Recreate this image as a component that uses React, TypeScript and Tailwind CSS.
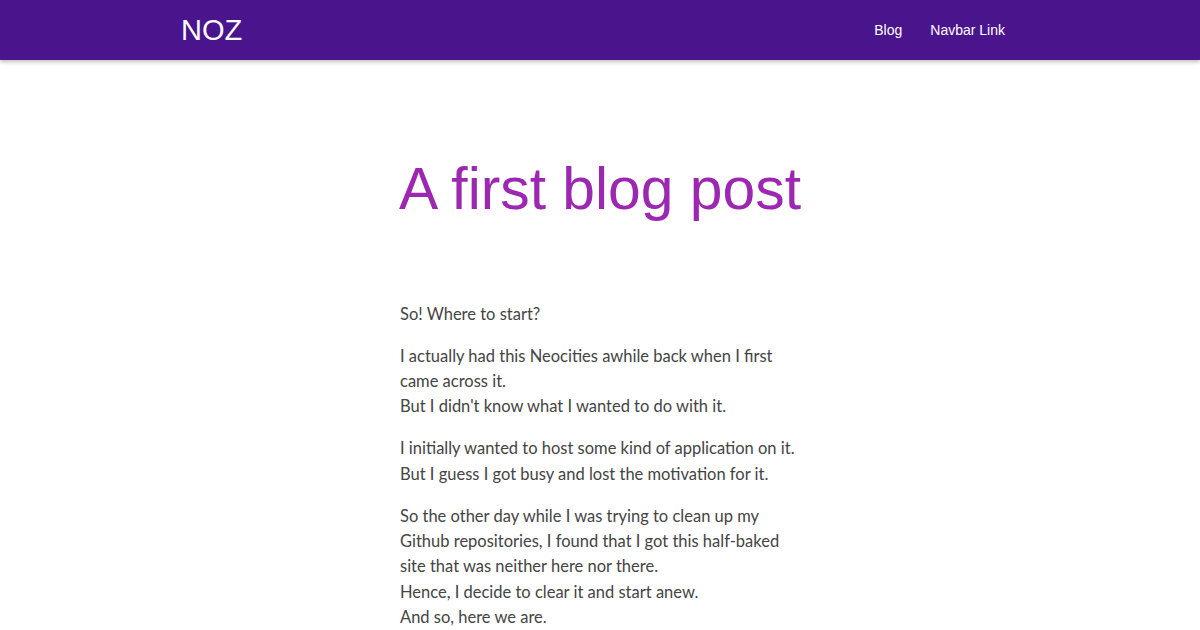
import React from "react";

export default function App() {
  const paragraphs = [
    ["So! Where to start?"],
    [
      "I actually had this Neocities awhile back when I first came across it.",
      "But I didn't know what I wanted to do with it.",
    ],
    [
      "I initially wanted to host some kind of application on it.",
      "But I guess I got busy and lost the motivation for it.",
    ],
    [
      "So the other day while I was trying to clean up my Github repositories, I found that I got this half-baked site that was neither here nor there.",
      "Hence, I decide to clear it and start anew.",
      "And so, here we are.",
    ],
  ];

  return (
    <div className="min-h-screen bg-white">
      <nav className="h-[60px] bg-[#4a148c] shadow-[0_2px_4px_rgba(0,0,0,0.25)] relative z-10">
        <div className="mx-auto w-[840px] h-full flex items-center justify-between">
          <a className="text-white text-[29px] font-['Liberation_Sans',Arial,sans-serif] leading-none pl-[1px]">NOZ</a>
          <ul className="flex h-full items-center font-['Liberation_Sans',Arial,sans-serif] text-[14px] text-white">
            <li className="px-[15px] pl-[17px] pr-[13px]">Blog</li>
            <li className="px-[15px]">Navbar Link</li>
          </ul>
        </div>
      </nav>

      <main className="mx-auto w-[840px]">
        <h1 className="text-center text-[#9c27b0] text-[58.8px] leading-[1.1] pt-[97px] font-['Liberation_Sans',Arial,sans-serif]">
          A first blog post
        </h1>
        <article className="mx-auto w-[400px] pt-[80px] font-['Lato','Open_Sans',sans-serif] text-[16.5px] leading-[25.2px] text-[#444444] flex flex-col gap-[17px]">
          {paragraphs.map((p, i) => (
            <p key={i}>
              {p.map((line, j) => (
                <React.Fragment key={j}>
                  {j > 0 && <br />}
                  {line}
                </React.Fragment>
              ))}
            </p>
          ))}
        </article>
      </main>
    </div>
  );
}
